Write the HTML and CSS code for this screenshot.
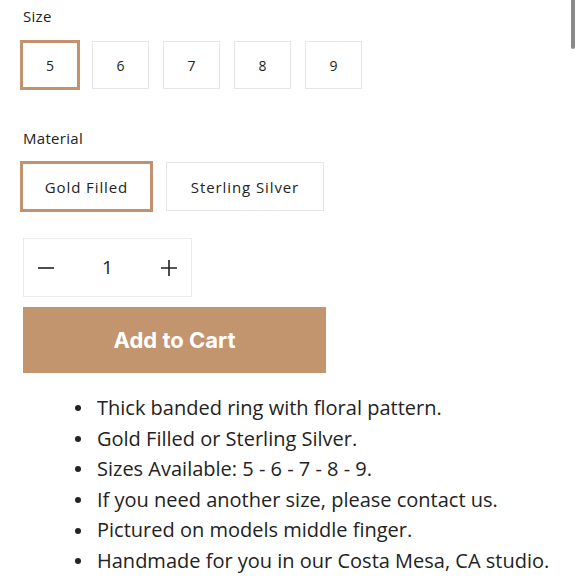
FILE: index.html
```html
<!DOCTYPE html>
<html>
<head>
<meta charset="utf-8">
<link rel="stylesheet" href="styles.css">
</head>
<body>
<div class="scroll-indicator"></div>
<div class="page">
  <div class="label">Size</div>
  <div class="options sizes">
    <div class="opt size selected">5</div>
    <div class="opt size">6</div>
    <div class="opt size">7</div>
    <div class="opt size">8</div>
    <div class="opt size">9</div>
  </div>
  <div class="label label-material">Material</div>
  <div class="options materials">
    <div class="opt material gold selected">Gold Filled</div>
    <div class="opt material silver">Sterling Silver</div>
  </div>
  <div class="qty">
    <span class="qty-btn">
      <svg width="16" height="16" viewBox="0 0 16 16"><path d="M0 8H16" stroke="#222" stroke-width="1.6"/></svg>
    </span>
    <span class="qty-num">1</span>
    <span class="qty-btn">
      <svg width="16" height="16" viewBox="0 0 16 16"><path d="M0 8H16M8 0V16" stroke="#222" stroke-width="1.6"/></svg>
    </span>
  </div>
  <button class="add">Add to Cart</button>
  <ul class="features">
    <li>Thick banded ring with floral pattern.</li>
    <li>Gold Filled or Sterling Silver.</li>
    <li>Sizes Available: 5 - 6 - 7 - 8 - 9.</li>
    <li>If you need another size, please contact us.</li>
    <li>Pictured on models middle finger.</li>
    <li>Handmade for you in our Costa Mesa, CA studio.</li>
  </ul>
</div>
</body>
</html>
```

FILE: styles.css
```css
* { box-sizing: border-box; }
html, body { margin: 0; padding: 0; background: #fff; }
body {
  font-family: "Open Sans", "Noto Sans", sans-serif;
  color: #232323;
  width: 580px;
  height: 580px;
  overflow: hidden;
  position: relative;
}
.scroll-indicator {
  position: absolute;
  left: 571px;
  top: 0;
  width: 4px;
  height: 49px;
  background: #8a8a8a;
  border-radius: 0 0 2px 2px;
}
.page {
  padding: 7px 0 0 20px;
}
.label {
  font-size: 15px;
  line-height: 19px;
  padding-left: 3px;
  letter-spacing: 0.3px;
}
.options {
  display: flex;
  align-items: center;
  margin-top: 14px;
}
.opt {
  display: flex;
  align-items: center;
  justify-content: center;
  border: 1px solid #e8e6e3;
  background: #fff;
  font-size: 14px;
  color: #232323;
}
.opt.selected {
  border: 3px solid #c1926d;
}
.size {
  width: 57px;
  height: 48px;
  margin-left: 14px;
}
.size.selected {
  width: 60px;
  height: 50px;
  margin-left: 0;
  margin-right: -2px;
}
.label-material {
  margin-top: 39px;
}
.materials { margin-top: 13px; }
.material {
  height: 49px;
  font-size: 15px;
  letter-spacing: 0.9px;
}
.gold {
  width: 133px;
  height: 51px;
}
.silver {
  width: 158px;
  margin-left: 13px;
}
.qty {
  display: flex;
  align-items: center;
  justify-content: space-between;
  width: 169px;
  height: 59px;
  margin: 26px 0 0 3px;
  border: 1px solid #eeece9;
  padding: 0 14px;
  font-size: 19px;
}
.qty-btn { display: flex; width: 16px; height: 16px; }
.qty-num { line-height: 1; }
.add {
  display: block;
  width: 303px;
  height: 66px;
  margin: 10px 0 0 3px;
  border: 0;
  background: #c3956f;
  color: #fff;
  font-family: Inter, "Liberation Sans", sans-serif;
  font-weight: 700;
  font-size: 22px;
  padding: 0;
}
.features {
  list-style: none;
  margin: 20px 0 0 0;
  padding: 0 0 0 55px;
  font-size: 20px;
  line-height: 30.6px;
}
.features li {
  display: flex;
  align-items: center;
}
.features li::before {
  content: "";
  width: 6px;
  height: 6px;
  border-radius: 50%;
  background: #232323;
  margin-right: 16px;
  flex: none;
}
```
